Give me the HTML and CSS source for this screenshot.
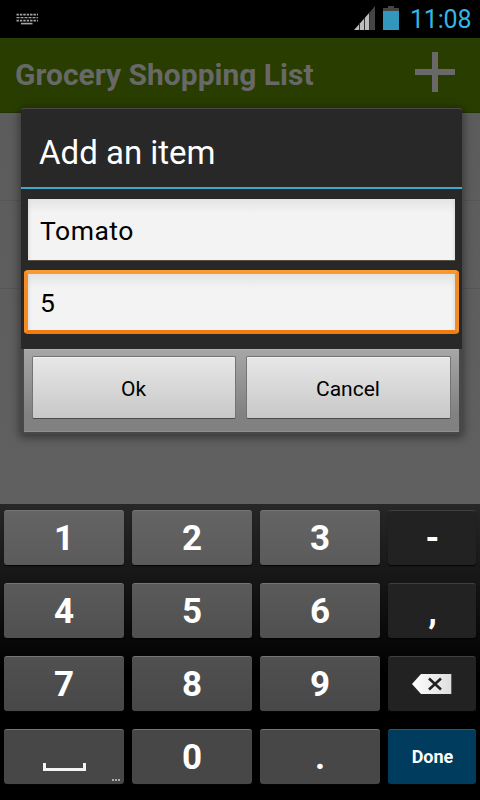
FILE: index.html
```html
<!DOCTYPE html>
<html lang="en">
<head>
<meta charset="utf-8">
<title>Grocery Shopping List</title>
<link rel="stylesheet" href="styles.css">
</head>
<body>
<div class="phone">
  <header class="status">
    <svg class="kb" width="22" height="12" viewBox="0 0 22 12" stroke="#a4a4a4" fill="none">
      <path d="M.5 1.6H22M.5 7.6H22" stroke-width="1.6" stroke-dasharray="2.4 1"/>
      <path d="M.5 4.6H22" stroke-width="1.4" stroke-dasharray="3 1"/>
      <path d="M5 10.6H16.500" stroke-width="1.6"/>
    </svg>
    <svg class="signal" width="22" height="24" viewBox="0 0 22 24">
      <path d="M0 24 16 6V24Z" fill="#bdbdbd"/>
      <path d="M16 6 21 0V24H16Z" fill="#444"/>
      <path d="M5.500 18V24M10.500 12V24M15.500 6V24" stroke="#333" stroke-width="1"/>
    </svg>
    <svg class="battery" width="16" height="24" viewBox="0 0 16 24">
      <path d="M5 0H11V2H16V6H0V2H5Z" fill="#454545"/>
      <path d="M0 5H16V24H0Z" fill="#3197bd"/>
    </svg>
    <span class="clock">11:08</span>
  </header>
  <div class="appbar">
    <h1>Grocery Shopping List</h1>
    <svg class="plus" width="40" height="40" viewBox="0 0 40 40"><path d="M17 0H23V17H40V23H23V40H17V23H0V17H17Z" fill="#686868"/></svg>
  </div>
  <main class="list">
    <div class="row"></div>
    <div class="row"></div>
  </main>
  <section class="dialog">
    <div class="panel">
      <h2>Add an item</h2>
      <div class="fields">
        <div class="field">Tomato</div>
        <div class="field focused">5</div>
      </div>
    </div>
    <div class="actions">
      <button class="action">Ok</button>
      <button class="action">Cancel</button>
    </div>
  </section>
  <section class="keyboard">
    <div class="key k1">1</div><div class="key k1">2</div><div class="key k1">3</div><div class="key dark">-</div>
    <div class="key k2">4</div><div class="key k2">5</div><div class="key k2">6</div><div class="key dark">,</div>
    <div class="key k3">7</div><div class="key k3">8</div><div class="key k3">9</div>
    <div class="key dark">
      <svg class="del" width="40" height="20" viewBox="0 0 40 20">
        <defs><linearGradient id="g"><stop offset="0" stop-color="#fff"/><stop offset="1" stop-color="#dedede"/></linearGradient></defs>
        <path d="M0 10 9 0H39.300V20H9Z" fill="url(#g)"/>
        <path d="M17 4.500 29 15.500M29 4.500 17 15.500" stroke="#222" stroke-width="2.600"/>
      </svg>
    </div>
    <div class="key k4 space">
      <svg width="43" height="8" viewBox="0 0 43 8"><path d="M1.500 0V6.500H41.500V0" fill="none" stroke="#f4f4f4" stroke-width="3"/></svg>
      <svg class="more" width="8" height="2" viewBox="0 0 8 2"><path d="M0 1H8" stroke="#aaa" stroke-width="2" stroke-dasharray="2 1"/></svg>
    </div>
    <div class="key k4">0</div><div class="key k4">.</div><div class="key done">Done</div>
  </section>
</div>
</body>
</html>
```
FILE: styles.css
```css
* { box-sizing: border-box; }
body { margin: 0; font-family: Roboto, "Liberation Sans", sans-serif; background: #000; }
h1, h2 { margin: 0; white-space: nowrap; }
svg { display: block; flex-shrink: 0; }
.phone { position: relative; width: 480px; height: 800px; display: flex; flex-direction: column; overflow: hidden; }
.status { height: 38px; background: #000; display: flex; align-items: flex-start; padding: 0 8px 0 16px; }
.kb { margin-top: 13px; }
.signal { margin: 6px 0 0 316px; }
.battery { margin: 6px 11px 0 7px; }
.clock { font-size: 25px; line-height: 40px; letter-spacing: -.2px; color: #33b5e5; white-space: nowrap; }
.appbar { height: 75px; background: #293d00; border-bottom: 1px solid #233400; display: flex; justify-content: space-between; padding: 14px 25px 0 15px; }
.appbar h1 { font-size: 30px; line-height: 45px; font-weight: 700; color: #686868; }
.list { height: 391px; background: linear-gradient(#5c5c5c, #606060); }
.row { height: 88px; border-bottom: 1px solid #565656; }
.dialog { position: absolute; left: 21px; top: 108px; width: 441px; height: 326px; }
.dialog { box-shadow: 0 2px 8px 2px rgba(0,0,0,.4); border-radius: 3px; background: #484848; }
.panel { height: 241px; background: #282828; border-top: 1px solid #484843; border-radius: 3px 3px 0 0; }
.panel h2 { height: 80px; padding: 0 18px; border-bottom: 2px solid #3eaacb; font-size: 33px; line-height: 87px; font-weight: 400; color: #fff; }
.fields { display: flex; flex-direction: column; gap: 9px; padding: 10px 3px 0; }
.field { height: 62px; margin: 0 4px; padding: 0 12px; border-bottom: 1px solid #5a5142; background: linear-gradient(#e4e4e4, #f3f3f3 14px); box-shadow: inset -4px 0 4px -4px #ccc, inset 4px 0 4px -4px #ccc; font-size: 26.5px; line-height: 64px; letter-spacing: .5px; color: #000; }
.focused { height: 64px; margin: 0; padding: 0 12px; border: 4px solid; border-color: #fb9930 #f38c22 #f27c10; border-radius: 4px; line-height: 58px; background-clip: padding-box; }
.actions { margin: 0 3px; height: 83px; display: flex; gap: 10px; padding: 6px 8px 0; background: linear-gradient(#a6a6a6, #818181 80%); border-top: 1px solid #b2b2b2; border-bottom: 1px solid #909090; }
.action { width: 204px; height: 63px; border: 1px solid #747474; border-bottom-color: #4c4c4c; border-radius: 2px; padding: 2px 1px 0 0; background: linear-gradient(#e7e7e7, #c8c8c8); box-shadow: inset 0 1px #f1f1f1; font: 21px Roboto, sans-serif; color: #000; }
.action + .action { width: 205px; }
.keyboard { height: 296px; display: grid; grid-template-columns: 120px 120px 120px 88px; grid-auto-rows: 55px; gap: 18px 8px; padding: 6px 4px; background: linear-gradient(#272727, #000 58%); }
.key { position: relative; display: flex; align-items: center; justify-content: center; padding-top: 2px; border-radius: 3px; border-top: 1px solid #757575; box-shadow: 0 1px 1px #050505; color: #fff; font-size: 35px; line-height: 54px; font-weight: 700; }
.k1 { background: linear-gradient(#646464, #5b5b5b); }
.k2 { background: linear-gradient(#5a5a5a, #505050); }
.k3 { background: linear-gradient(#505050, #484848); }
.k4 { background: #474747; }
.dark { padding-left: 1px; background: #222; border-top-color: #404040; }
.done { padding: 0 0 0 1px; background: #003c5d; border-top-color: #36566a; font-size: 18px; }
.del { margin: -2px 1px 0 0; }
.space { padding: 20px 0 0 0; }
.more { position: absolute; right: 4px; bottom: 3px; }
```
